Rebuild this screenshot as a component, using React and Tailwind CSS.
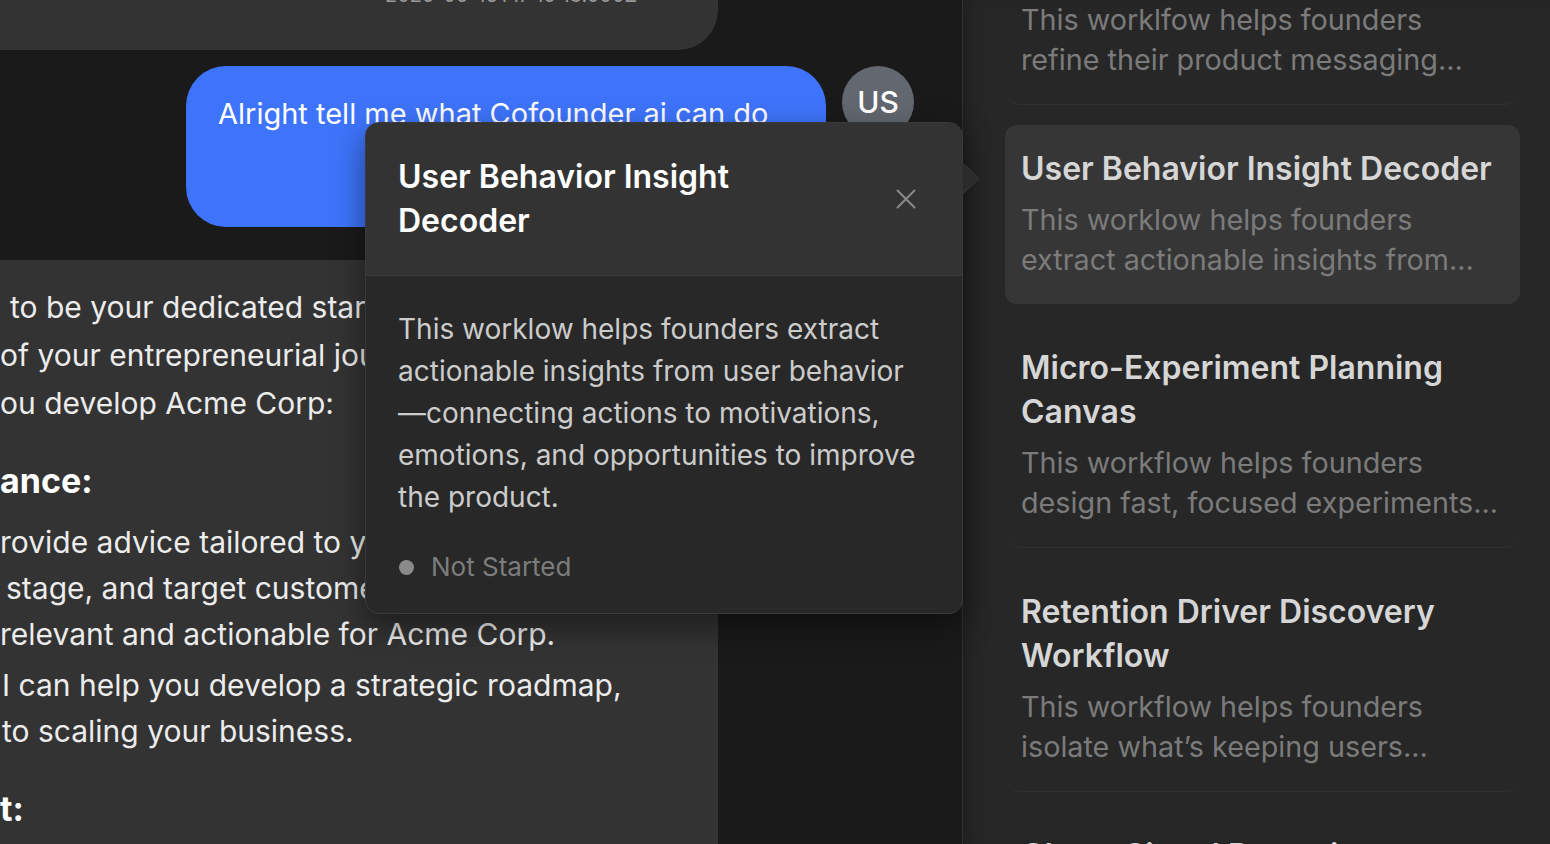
import React from 'react';

const workflows = [
  {
    title: 'Product Messaging Refiner',
    desc: ['This worklfow helps founders', 'refine their product messaging...'],
  },
  {
    title: 'User Behavior Insight Decoder',
    desc: ['This worklow helps founders', 'extract actionable insights from...'],
    active: true,
  },
  {
    title: 'Micro-Experiment Planning Canvas',
    desc: ['This workflow helps founders', 'design fast, focused experiments...'],
  },
  {
    title: 'Retention Driver Discovery Workflow',
    desc: ['This workflow helps founders', 'isolate what\u2019s keeping users...'],
  },
  {
    title: 'Churn Signal Detection Framework',
    desc: ['This workflow helps founders', 'spot early warning signs...'],
  },
];

function WorkflowCard({ item }) {
  return (
    <div
      className={`w-[515px] shrink-0 px-[16px] pt-[22px] pb-[24px] ${
        item.active ? 'rounded-[12px] bg-[#363636]' : 'rounded-[16px] border-b border-[#303030]'
      }`}
    >
      <h3 className="w-[480px] text-[32px] leading-[44px] font-semibold text-[#d6d6d6]">{item.title}</h3>
      <div className="mt-[9px] text-[28.75px] leading-[40px] text-[#7b7b7b]">
        {item.desc.map((line, idx) => (
          <p key={idx} className="whitespace-nowrap">{line}</p>
        ))}
      </div>
    </div>
  );
}

export default function App() {
  return (
    <div className="relative flex h-[844px] w-[1550px] overflow-hidden bg-[#1a1a1a] font-[Inter,sans-serif]">
      {/* CHAT */}
      <main className="flex w-[962px] shrink-0 flex-col">
        <div className="h-[50px] w-[718px] shrink-0 overflow-hidden rounded-br-[40px] bg-[#333333]">
          <p className="-mt-[17px] pl-[385px] text-[20px] leading-[24px] text-[#9b9b9b]">2025-05-16T17:15:13.000Z</p>
        </div>

        <div className="mt-[16px] flex shrink-0 justify-end gap-[16px] pr-[48px]">
          <div className="h-[161px] w-[640px] rounded-[40px] bg-[#3e74fb] px-[32px] pt-[28px]">
            <p className="text-[29px] leading-[40px] text-white">Alright tell me what Cofounder ai can do</p>
            <p className="mt-[40px] text-right text-[18px] text-[#dce6ff]">2025-05-16T17:15:20.000Z</p>
          </div>
          <div className="flex size-[72px] items-center justify-center rounded-full bg-[#636870] text-[30px] font-medium text-white">
            US
          </div>
        </div>

        <div className="mt-[33px] w-[718px] flex-1 overflow-hidden rounded-tr-[40px] bg-[#333333] pt-[23px] text-[30px] text-[#ececec]">
          <div className="leading-[48px] whitespace-nowrap">
            <p className="ml-[10px]">to be your dedicated startup advisor at every stage</p>
            <p>of your entrepreneurial journey. Here is how I can help</p>
            <p>ou develop Acme Corp:</p>
          </div>
          <h4 className="mt-[34px] text-[34px] leading-[40px] font-bold text-white">ance:</h4>
          <div className="mt-[18px] leading-[46px] whitespace-nowrap">
            <p>rovide advice tailored to your industry, business</p>
            <p className="ml-[6px]">stage, and target customers, making every insight</p>
            <p>relevant and actionable for Acme Corp.</p>
          </div>
          <div className="mt-[5px] leading-[46px] whitespace-nowrap">
            <p className="ml-[2px]">I can help you develop a strategic roadmap,</p>
            <p className="ml-[2px]">to scaling your business.</p>
          </div>
          <h4 className="mt-[35px] text-[34px] leading-[40px] font-bold text-white">t:</h4>
        </div>
      </main>

      {/* WORKFLOWS SIDEBAR */}
      <aside className="flex-1 border-l border-[#303030] bg-[#272727] pr-[30px] pl-[42px] shadow-[inset_14px_0_24px_-14px_rgba(0,0,0,0.35)]">
        <div className="-mt-[75px] flex flex-col gap-[20px]">
          {workflows.map((item, idx) => (
            <WorkflowCard key={idx} item={item} />
          ))}
        </div>
      </aside>

      {/* POPOVER */}
      <div className="absolute top-[122px] left-[365px] h-[492px] w-[598px] overflow-hidden rounded-[14px] border border-[#3a3a3a] bg-[#282828] shadow-[0_12px_32px_rgba(0,0,0,0.45)]">
        <div className="flex items-center border-b border-[#3b3b3b] bg-[#333333] py-[32px] pr-[46px] pl-[32px]">
          <h2 className="w-[440px] text-[32px] leading-[44px] font-semibold text-white">User Behavior Insight Decoder</h2>
          <button className="ml-auto text-[#8a8a8a]">
            <svg width="20" height="20" viewBox="0 0 20 20" fill="none" stroke="currentColor" strokeWidth="2" strokeLinecap="round">
              <path d="M1.5 1.5l17 17M18.5 1.5l-17 17" />
            </svg>
          </button>
        </div>
        <div className="px-[32px] pt-[32px]">
          <div className="text-[28px] leading-[42px] whitespace-nowrap text-[#cccccc]">
            <p>This worklow helps founders extract</p>
            <p>actionable insights from user behavior</p>
            <p>—connecting actions to motivations,</p>
            <p>emotions, and opportunities to improve</p>
            <p>the product.</p>
          </div>
          <div className="mt-[28px] flex items-center gap-[17px] text-[26px] leading-[42px] text-[#7d7d7d]">
            <span className="ml-[1px] size-[15px] rounded-full bg-[#8a8a8a]"></span>
            <span>Not Started</span>
          </div>
        </div>
      </div>
      <svg className="absolute top-[162px] left-[962px]" width="19" height="33" viewBox="0 0 19 33">
        <polygon points="0,0.5 17,16.5 0,32.5" fill="#2b2b2b" stroke="#3a3a3a" strokeWidth="1" />
      </svg>
    </div>
  );
}
